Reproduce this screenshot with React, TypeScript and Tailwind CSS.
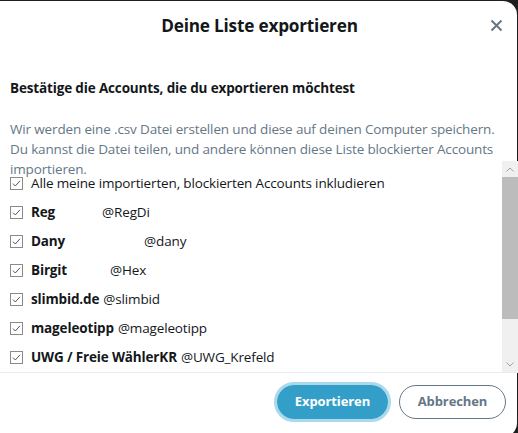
import React from "react";

function Check() {
  return (
    <svg width="13" height="13" viewBox="0 0 13 13" className="shrink-0">
      <rect x="0.5" y="0.5" width="12" height="12" fill="#fff" stroke="#8a8a8a" />
      <path d="M3 6.6 L5.3 9 L10 3.8" fill="none" stroke="#555" strokeWidth="1" />
    </svg>
  );
}

const rows: { name: string; handle: string; gap: string }[] = [
  { name: "Reg", handle: "@RegDi", gap: "ml-[47px]" },
  { name: "Dany", handle: "@dany", gap: "ml-[79px]" },
  { name: "Birgit", handle: "@Hex", gap: "ml-[43px]" },
  { name: "slimbid.de", handle: "@slimbid", gap: "ml-[4px]" },
  { name: "mageleotipp", handle: "@mageleotipp", gap: "ml-[4px]" },
  { name: "UWG / Freie WählerKR", handle: "@UWG_Krefeld", gap: "ml-[4px]" },
];

export default function App() {
  return (
    <div
      className="w-[518px] h-[433px] bg-[#1e1e1e] overflow-hidden pt-[1px]"
      style={{ fontFamily: '"Open Sans", "Noto Sans", Arial, sans-serif' }}
    >
      <div className="ml-[-14px] w-[531px] h-[436px] bg-white rounded-[14px] flex flex-col pl-[14px]">
        {/* header */}
        <div className="h-[50px] flex items-center relative">
          <div className="flex-1 text-center text-[17.2px] font-bold text-[#14171a] tracking-[-0.2px] pl-[2px]">
            Deine Liste exportieren
          </div>
          <div className="absolute right-[14px] top-[18px]">
            <svg width="13" height="13" viewBox="0 0 13 13">
              <path d="M1.5 1.5 L11.5 11.5 M11.5 1.5 L1.5 11.5" stroke="#657786" strokeWidth="2" />
            </svg>
          </div>
        </div>

        {/* subtitle */}
        <div className="pl-[10px] mt-[27px] text-[13.5px] font-bold text-[#14171a] leading-[20px] tracking-[-0.15px]">
          Bestätige die Accounts, die du exportieren möchtest
        </div>

        {/* paragraph */}
        <div className="pl-[10px] pr-[16px] mt-[21px] h-[42px] text-[13.5px] text-[#657786] leading-[20px] tracking-[-0.15px]">
          Wir werden eine .csv Datei erstellen und diese auf deinen Computer speichern. Du kannst die Datei teilen, und andere können diese Liste blockierter Accounts importieren.
        </div>

        {/* list with scrollbar */}
        <div className="flex h-[211px] w-[518px]">
          <div className="flex-1 pl-[10px] pt-[12px] flex flex-col text-[13.5px] text-[#14171a] tracking-[-0.15px]">
            <div className="h-[20px] flex items-center gap-[8px] mb-[5px]">
              <Check />
              <span>Alle meine importierten, blockierten Accounts inkludieren</span>
            </div>
            {rows.map((r) => (
              <div key={r.handle} className="h-[29.6px] flex items-center gap-[8px]">
                <Check />
                <span className="flex items-center">
                  <span className="font-bold">{r.name}</span>
                  <span className={r.gap}>{r.handle}</span>
                </span>
              </div>
            ))}
          </div>
          {/* scrollbar */}
          <div className="w-[16px] bg-[#f0f0f0] flex flex-col">
            <div className="h-[16px] flex items-center justify-center">
              <svg width="8" height="5" viewBox="0 0 8 5">
                <path d="M0.5 4.5 L4 1 L7.5 4.5" fill="none" stroke="#a3a3a3" strokeWidth="1" />
              </svg>
            </div>
            <div className="h-[142px] bg-[#bcbcbc]" />
            <div className="flex-1" />
            <div className="h-[16px] flex items-center justify-center">
              <svg width="8" height="5" viewBox="0 0 8 5">
                <path d="M0.5 0.5 L4 4 L7.5 0.5" fill="none" stroke="#a3a3a3" strokeWidth="1" />
              </svg>
            </div>
          </div>
        </div>

        {/* footer */}
        <div className="border-t border-[#e6ecf0] w-[518px] flex justify-end items-center gap-[8px] pr-[12px] pt-[9px]">
          <div className="rounded-full border-[3px] border-[#aad9ec]">
            <button className="h-[34px] w-[111px] rounded-full bg-[#339fc9] text-white text-[13px] font-bold tracking-[-0.1px]">
              Exportieren
            </button>
          </div>
          <button className="h-[34px] w-[107px] rounded-full border border-[#657786] text-[#657786] text-[13px] font-bold bg-white tracking-[-0.1px]">
            Abbrechen
          </button>
        </div>
      </div>
    </div>
  );
}
